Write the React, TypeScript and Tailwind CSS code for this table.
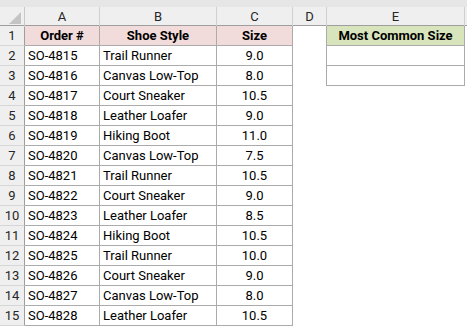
import React from 'react';

type Row = [string, string, string];

const rows: Row[] = [
  ['SO-4815', 'Trail Runner', '9.0'],
  ['SO-4816', 'Canvas Low-Top', '8.0'],
  ['SO-4817', 'Court Sneaker', '10.5'],
  ['SO-4818', 'Leather Loafer', '9.0'],
  ['SO-4819', 'Hiking Boot', '11.0'],
  ['SO-4820', 'Canvas Low-Top', '7.5'],
  ['SO-4821', 'Trail Runner', '10.5'],
  ['SO-4822', 'Court Sneaker', '9.0'],
  ['SO-4823', 'Leather Loafer', '8.5'],
  ['SO-4824', 'Hiking Boot', '10.5'],
  ['SO-4825', 'Trail Runner', '10.0'],
  ['SO-4826', 'Court Sneaker', '9.0'],
  ['SO-4827', 'Canvas Low-Top', '8.0'],
  ['SO-4828', 'Leather Loafer', '10.5'],
];

const cols = 'grid grid-cols-[25px_75px_117px_76px_34px_138px_1fr]';
const rowHead = 'h-[20px] flex items-center justify-center bg-[#efefef] border-r border-b border-r-[#9e9e9e] border-b-[#d6d6d6] text-[#262626]';
const cell = 'h-[20px] flex items-center border-r border-b border-[#ababab] px-[3px] pt-[1px]';

const App: React.FC = () => {
  return (
    <div className="w-[467px] h-[328px] overflow-hidden bg-white text-[13px] text-black" style={{ fontFamily: 'Roboto, "Liberation Sans", sans-serif' }}>
      {/* strip above column headers */}
      <div className="h-[7px] bg-[#e6e6e6]" />

      {/* column headers */}
      <div className={cols + ' h-[19px] bg-[#efefef] border-b border-[#9e9e9e] text-[#262626]'}>
        <div className="relative border-r border-[#c8c8c8]">
          <svg className="absolute right-[3px] bottom-[3px]" width="12" height="12" viewBox="0 0 12 12">
            <polygon points="12,0 12,12 0,12" fill="#c4c4c4" />
          </svg>
        </div>
        {['A', 'B', 'C', 'D', 'E'].map(l => (
          <div key={l} className="flex items-center justify-center border-r border-[#d0d0d0]">{l}</div>
        ))}
        <div />
      </div>

      {/* row 1: table headers */}
      <div className={cols}>
        <div className={rowHead}>1</div>
        <div className={cell + ' justify-center bg-[#f2dcdb] font-bold'}>Order #</div>
        <div className={cell + ' justify-center bg-[#f2dcdb] font-bold'}>Shoe Style</div>
        <div className={cell + ' justify-center bg-[#f2dcdb] font-bold'}>Size</div>
        <div className="h-[20px]" />
        <div className={cell + ' justify-center bg-[#d8e4bc] font-bold border-l -ml-px'}>Most Common Size</div>
        <div />
      </div>

      {rows.map((r, i) => (
        <div key={r[0]} className={cols}>
          <div className={rowHead}>{i + 2}</div>
          <div className={cell}>{r[0]}</div>
          <div className={cell}>{r[1]}</div>
          <div className={cell + ' justify-center'}>{r[2]}</div>
          <div className="h-[20px]" />
          {i < 2 ? <div className={cell + ' border-l -ml-px'} /> : <div />}
          <div />
        </div>
      ))}
    </div>
  );
};

export default App;
